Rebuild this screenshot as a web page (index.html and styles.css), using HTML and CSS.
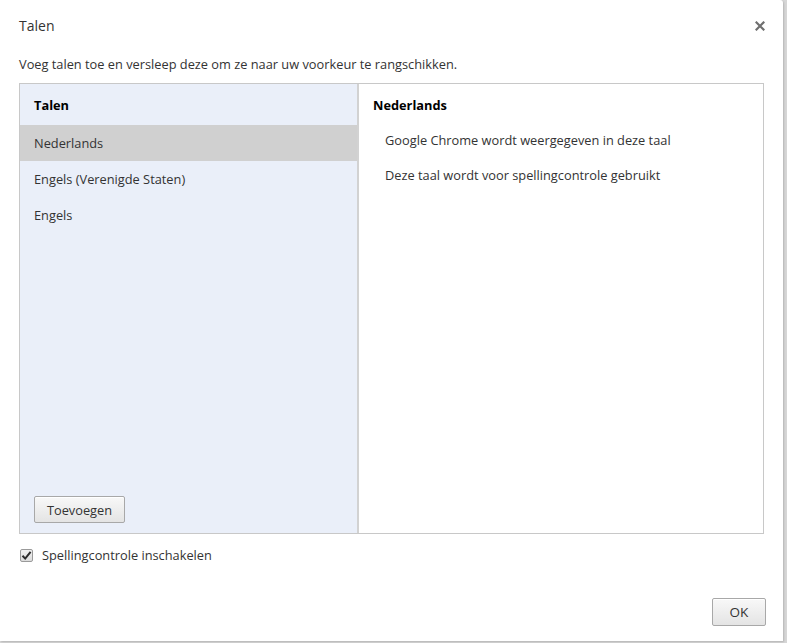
FILE: index.html
```html
<!DOCTYPE html>
<html lang="nl">
<head>
<meta charset="utf-8">
<title>Talen</title>
<link rel="stylesheet" href="styles.css">
</head>
<body>
<div class="dialog">
  <div class="title-row">
    <h1 class="title">Talen</h1>
    <button class="close" aria-label="Sluiten">
      <svg width="10" height="10" viewBox="0 0 10 10"><path d="M1.5 1.5 L8.5 8.5 M8.5 1.5 L1.5 8.5" stroke="#6f6f6f" stroke-width="2.2" stroke-linecap="square"/></svg>
    </button>
  </div>
  <p class="intro">Voeg talen toe en versleep deze om ze naar uw voorkeur te rangschikken.</p>
  <div class="box">
    <div class="list-pane">
      <div class="list-head">Talen</div>
      <div class="list-item selected">Nederlands</div>
      <div class="list-item">Engels (Verenigde Staten)</div>
      <div class="list-item">Engels</div>
      <div class="list-foot">
        <button class="btn add">Toevoegen</button>
      </div>
    </div>
    <div class="detail-pane">
      <div class="detail-head">Nederlands</div>
      <div class="detail-line">Google Chrome wordt weergegeven in deze taal</div>
      <div class="detail-line">Deze taal wordt voor spellingcontrole gebruikt</div>
    </div>
  </div>
  <label class="check-row">
    <span class="checkbox">
      <svg width="11" height="11" viewBox="0 0 11 11"><path d="M1.5 5.8 L4.2 8.6 L9.6 1.8" fill="none" stroke="#2b2b2b" stroke-width="2"/></svg>
    </span>
    <span>Spellingcontrole inschakelen</span>
  </label>
  <div class="footer">
    <button class="btn ok">OK</button>
  </div>
</div>
</body>
</html>
```
FILE: styles.css
```css
html, body {
  margin: 0;
  padding: 0;
}
body {
  width: 787px;
  height: 643px;
  background: #d6d6d6;
  font-family: "Open Sans", "Noto Sans", sans-serif;
  font-size: 12.8px;
  color: #333;
  overflow: hidden;
}
.dialog {
  position: relative;
  width: 783px;
  height: 641px;
  background: #fff;
  border-top-right-radius: 3px;
  box-sizing: border-box;
  padding: 0 19px;
  display: flex;
  flex-direction: column;
  box-shadow: 1px 1px 2px rgba(0,0,0,0.15);
}
.title-row {
  display: flex;
  justify-content: space-between;
  align-items: center;
  height: 20px;
  margin-top: 16px;
}
.title {
  margin: 0;
  font-size: 14px;
  font-weight: normal;
  line-height: 20px;
  color: #333;
}
.close {
  border: 0;
  background: none;
  padding: 0;
  margin-right: -1px;
  width: 10px;
  height: 10px;
  display: flex;
}
.intro {
  margin: 20px 0 0;
  line-height: 16px;
  color: #333;
}
.box {
  margin-top: 11px;
  height: 451px;
  border: 1px solid #c8c8c8;
  box-sizing: border-box;
  display: flex;
}
.list-pane {
  width: 337px;
  background: #eaeff9;
  border-right: 2px solid #d2d2d2;
  display: flex;
  flex-direction: column;
}
.list-head {
  height: 41px;
  line-height: 42px;
  padding-left: 14px;
  font-weight: bold;
  color: #000;
}
.list-item {
  height: 36px;
  line-height: 36px;
  padding-left: 14px;
  color: #333;
}
.list-item.selected {
  background: #d0d0d0;
}
.list-foot {
  margin-top: auto;
  padding: 0 0 10px 14px;
}
.btn {
  font-family: inherit;
  font-size: 12.8px;
  color: #333;
  border: 1px solid #a8a8a8;
  border-radius: 2px;
  background: linear-gradient(#f8f8f8, #e4e4e4);
  box-shadow: inset 0 1px 0 #fff;
  padding: 0;
}
.add {
  width: 91px;
  height: 27px;
}
.detail-pane {
  flex: 1;
  padding-left: 14px;
}
.detail-head {
  height: 41px;
  line-height: 42px;
  font-weight: bold;
  color: #000;
}
.detail-line {
  padding-left: 12px;
  height: 35px;
  line-height: 30px;
  color: #333;
}
.check-row {
  display: flex;
  align-items: center;
  gap: 9px;
  margin-top: 13px;
  margin-left: 1px;
  height: 16px;
  color: #333;
}
.checkbox {
  width: 13px;
  height: 13px;
  box-sizing: border-box;
  border: 1px solid #9a9a9a;
  border-radius: 2px;
  background: linear-gradient(#f0f0f0, #dcdcdc);
  display: flex;
  align-items: center;
  justify-content: center;
}
.footer {
  margin-top: auto;
  display: flex;
  justify-content: flex-end;
  margin-right: -2px;
  padding-bottom: 15px;
}
.ok {
  width: 54px;
  height: 28px;
  font-size: 13.5px;
}
```
